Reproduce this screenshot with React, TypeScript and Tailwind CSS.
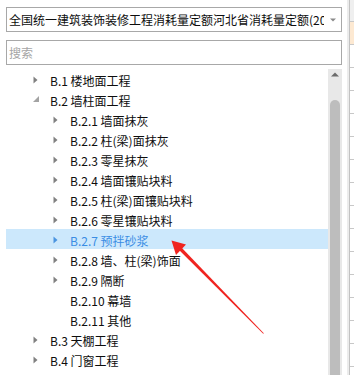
import { FC } from "react";

type Node = {
  label: string;
  level: number;
  arrow: "none" | "closed" | "open";
  selected?: boolean;
};

const nodes: Node[] = [
  { label: "B.1 楼地面工程", level: 1, arrow: "closed" },
  { label: "B.2 墙柱面工程", level: 1, arrow: "open" },
  { label: "B.2.1 墙面抹灰", level: 2, arrow: "closed" },
  { label: "B.2.2 柱(梁)面抹灰", level: 2, arrow: "closed" },
  { label: "B.2.3 零星抹灰", level: 2, arrow: "closed" },
  { label: "B.2.4 墙面镶贴块料", level: 2, arrow: "closed" },
  { label: "B.2.5 柱(梁)面镶贴块料", level: 2, arrow: "closed" },
  { label: "B.2.6 零星镶贴块料", level: 2, arrow: "closed" },
  { label: "B.2.7 预拌砂浆", level: 2, arrow: "closed", selected: true },
  { label: "B.2.8 墙、柱(梁)饰面", level: 2, arrow: "closed" },
  { label: "B.2.9 隔断", level: 2, arrow: "closed" },
  { label: "B.2.10 幕墙", level: 2, arrow: "none" },
  { label: "B.2.11 其他", level: 2, arrow: "none" },
  { label: "B.3 天棚工程", level: 1, arrow: "closed" },
  { label: "B.4 门窗工程", level: 1, arrow: "closed" },
  { label: "B.5 油漆、涂料、裱糊工程", level: 1, arrow: "closed" },
];

const Arrow: FC<{ kind: Node["arrow"]; selected?: boolean }> = ({
  kind,
  selected,
}) => {
  if (kind === "none") return <span className="w-[17px] shrink-0" />;
  if (kind === "open") {
    return (
      <span className="w-[17px] shrink-0 flex items-center">
        <svg width="6" height="6" viewBox="0 0 6 6" className="-mt-[4px]">
          <polygon points="0,6 6,6 6,0" fill="#a3a3a3" />
        </svg>
      </span>
    );
  }
  return (
    <span className="w-[17px] shrink-0 flex items-center">
      <svg width="5" height="8" viewBox="0 0 5 8" className="-mt-[1px]">
        <polygon points="0.5,0.5 4.5,4 0.5,7.5" fill={selected ? "#4a94e0" : "#808080"} />
      </svg>
    </span>
  );
};

const TreeRow: FC<{ node: Node }> = ({ node }) => (
  <div
    className={`h-[20px] shrink-0 flex items-center whitespace-nowrap pt-[3px] ${
      node.selected ? "bg-[#cce8fc] text-[#3a8de4]" : "text-[#0d0d0d]"
    }`}
    style={{ paddingLeft: 27 + (node.level - 1) * 20 }}
  >
    <Arrow kind={node.arrow} selected={node.selected} />
    <span className="leading-[14px]">{node.label}</span>
  </div>
);

const SideStrip = () => (
  <div className="w-[7px] flex shrink-0">
    <div className="w-[2px] bg-[#ececec]" />
    <div className="w-[1px] bg-[#c2c2c2]" />
    <div className="flex-1 flex flex-col">
      <div className="h-[22px] bg-[#efefef] border-b border-[#c8c8c8]" />
      <div className="h-[23px] bg-[#fde9d2] border-b border-[#c8c8c8]" />
      {Array.from({ length: 14 }).map((_, i) => (
        <div key={i} className="h-[23px] shrink-0 bg-white border-b border-[#c8c8c8]" />
      ))}
    </div>
  </div>
);

const App = () => {
  return (
    <div
      className="relative w-[354px] h-[375px] overflow-hidden bg-white flex text-[12px]"
      style={{ fontFamily: '"Noto Sans CJK SC", "Microsoft YaHei", sans-serif' }}
    >
      <div className="w-[347px] flex flex-col pl-[6px] pr-[5px] pt-[7px]">
        <div className="h-[25px] border border-[#a8a8a8] flex items-center pl-[2px] pr-[5px] bg-white">
          <span className="flex-1 overflow-hidden whitespace-nowrap text-[#0d0d0d] leading-[14px]">
            全国统一建筑装饰装修工程消耗量定额河北省消耗量定额(2013)
          </span>
          <svg width="6" height="4" viewBox="0 0 6 4" className="ml-[6px] shrink-0">
            <polygon points="0,0.5 6,0.5 3,3.5" fill="#8a8a8a" />
          </svg>
        </div>
        <div className="mt-[8px] h-[25px] border border-[#a8a8a8] flex items-center pl-[2px]">
          <span className="text-[#a6a6a6] leading-[14px]">搜索</span>
        </div>
        <div className="mt-[4px] flex-1 flex min-h-0">
          <div className="flex-1 flex flex-col overflow-hidden">
            {nodes.map((n) => (
              <TreeRow key={n.label} node={n} />
            ))}
          </div>
          <div className="w-[14px] bg-[#e8e8e8] flex flex-col items-center">
            <svg width="8" height="5" viewBox="0 0 8 5" className="mt-[3px]">
              <polygon points="0,4.5 8,4.5 4,0.5" fill="#6b6b6b" />
            </svg>
            <div className="mt-[23px] w-[10px] flex-1 bg-[#bdbdbd] rounded-t-[5px]" />
          </div>
        </div>
      </div>
      <SideStrip />
      <svg
        className="absolute left-0 top-0 pointer-events-none"
        width="354"
        height="375"
        viewBox="0 0 354 375"
      >
        <polygon
          points="178.8,249.7 181.2,247.3 263.8,333.2 263.2,333.8"
          fill="#f02420"
        />
        <polygon points="171.5,240.5 186,244.5 176,255" fill="#f02420" />
      </svg>
    </div>
  );
};

export default App;
